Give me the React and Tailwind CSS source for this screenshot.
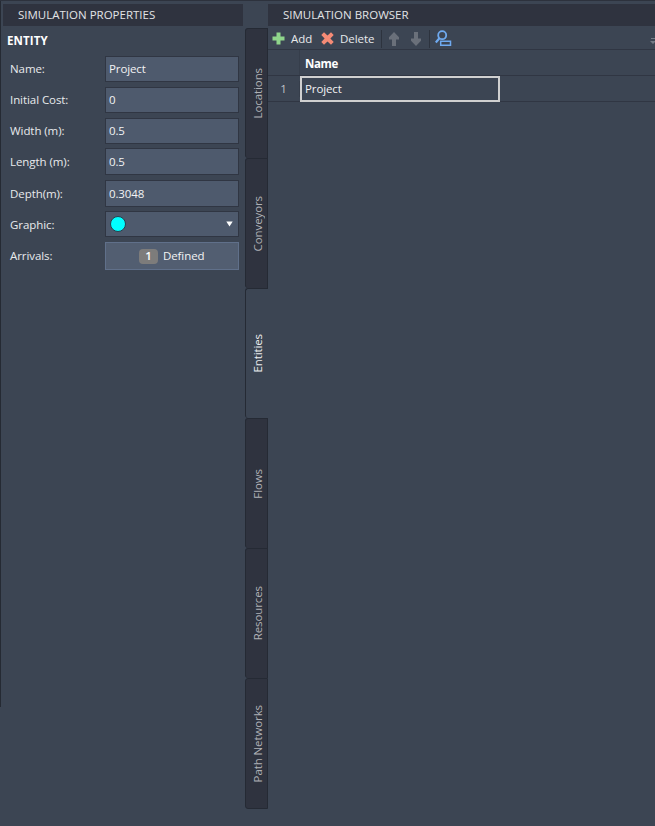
import React from "react";

const FIELDS = [
  { label: "Name:", value: "Project", row: "h-[26px] mb-[5px]" },
  { label: "Initial Cost:", value: "0", row: "h-[26px] mb-[5px]" },
  { label: "Width (m):", value: "0.5", row: "h-[26px] mb-[4px]" },
  { label: "Length (m):", value: "0.5", row: "h-[27px] mb-[5px]" },
  { label: "Depth(m):", value: "0.3048", row: "h-[27px] mb-[4px]" },
];

const TABS = ["Locations", "Conveyors", "Entities", "Flows", "Resources", "Path Networks"];

function Label({ children }) {
  return <div className="w-[95px] shrink-0 tracking-[-0.07px] text-[#e8eaec]">{children}</div>;
}

function Properties() {
  return (
    <section className="w-[245px] shrink-0">
      <div className="ml-[3px] mr-[2px] h-[22px] bg-[#2f333f] pl-[15px] leading-[22px] text-[#e2e4e6]">
        SIMULATION PROPERTIES
      </div>
      <div className="ml-[7px] mt-[5px] h-[20px] text-[11.5px] font-bold leading-[20px] tracking-[0.1px] text-white">ENTITY</div>
      <div className="pl-[10px] pt-[5px]">
        {FIELDS.map((f) => (
          <div key={f.label} className={`flex items-center ${f.row}`}>
            <Label>{f.label}</Label>
            <div className="flex h-full w-[134px] items-center border border-[#303643] bg-[#4e5a6d] pl-[3px] tracking-[-0.12px] text-[#f2f3f4]">
              {f.value}
            </div>
          </div>
        ))}
        <div className="mb-[5px] flex h-[26px] items-center">
          <div className="pt-[2px]"><Label>Graphic:</Label></div>
          <div className="flex h-full w-[134px] items-center justify-between border border-[#303643] bg-[#4e5a6d] pl-[4px] pr-[5px]">
            <span className="h-4 w-4 rounded-full border border-[#26404f] bg-[#00ffff]" />
            <svg width="7" height="6" viewBox="0 0 7 6" fill="#fff"><path d="M.3.5h6.4L3.5 5.5z" /></svg>
          </div>
        </div>
        <div className="flex h-[28px] items-center">
          <Label>Arrivals:</Label>
          <div className="flex h-full w-[134px] items-center border border-[#60708a] bg-[#525e71] pl-[33px] tracking-[-0.1px] text-[#f2f3f4]">
            <span className="mr-[5px] flex h-[15px] w-[19px] items-center justify-center rounded-[4px] bg-[#7d7c7b] font-semibold text-white">1</span>
            Defined
          </div>
        </div>
      </div>
    </section>
  );
}

function TabStrip() {
  return (
    <nav className="w-[23px] shrink-0 pt-[24px]">
      {TABS.map((t) => {
        const active = t === "Entities";
        return (
          <div
            key={t}
            className={`flex h-[130px] items-center justify-center border-l border-t last:h-[131px] last:border-b rounded-l-[3px] border-[#252a34] pl-[2px] ${
              active ? "bg-[#3c4553] pr-px text-[#eceef0]" : "border-r bg-[#2f333f] text-[#afb1b6]"
            }`}
          >
            <span className="rotate-180 whitespace-nowrap tracking-[-0.1px] [writing-mode:vertical-rl]">{t}</span>
          </div>
        );
      })}
    </nav>
  );
}

function Arrow({ down }) {
  return (
    <svg width="12" height="14" viewBox="0 0 12 14" fill="#6a707a" className={down ? "rotate-180" : ""}>
      <path d="M6 0 11 5.2V7.4H8V14H4V7.4H1V5.2z" />
    </svg>
  );
}

function Toolbar() {
  return (
    <div className="flex h-[24px] items-center border-b border-[#303643] pl-[4px] pt-[2px] text-[#e8eaec]">
      <svg width="13" height="13" viewBox="0 0 13 13" fill="#8fd58b"><path d="M4.5.5h4v4h4v4h-4v4h-4v-4h-4v-4h4z" /></svg>
      <span className="ml-[6px] w-[30px]">Add</span>
      <svg width="13" height="13" viewBox="0 0 13 13" fill="#f58b76"><path d="M3 .3 6.5 3.5 10 .3 12.7 3 9.4 6.5 12.7 10 10 12.7 6.5 9.5 3 12.7.3 10 3.6 6.5.3 3z" /></svg>
      <span className="ml-[6px] w-[41px] tracking-[-0.05px]">Delete</span>
      <span className="h-[18px] w-px bg-[#2d333e]" />
      <span className="ml-[6px] flex gap-[10px]"><Arrow /><Arrow down /></span>
      <span className="ml-[7px] h-[18px] w-px bg-[#2d333e]" />
      <svg className="ml-[5px]" width="17" height="17" viewBox="0 0 17 17" fill="none" stroke="#6faaf0">
        <circle cx="7.2" cy="5.2" r="4" strokeWidth="1.8" />
        <path d="M4.4 8.3.8 12.5" strokeWidth="2.2" />
        <path d="M5.7 11.3h9.8v3.9H5.7z" strokeWidth="1.5" />
      </svg>
      <svg className="ml-auto mt-[6px]" width="5" height="7" viewBox="0 0 5 7" fill="#747b86"><path d="M1 0h4v1H1zM0 3h5v1L3 6z" /></svg>
    </div>
  );
}

function Browser() {
  return (
    <section className="min-w-0 flex-1">
      <div className="h-[22px] bg-[#2f333f] pl-[15px] leading-[22px] text-[#e2e4e6]">SIMULATION BROWSER</div>
      <Toolbar />
      <div className="flex h-[26px] items-center border-b border-[#303643]">
        <div className="h-full w-[32px] border-r border-[#363e4b]" />
        <div className="pl-[5px] pt-[2px] text-[11.5px] font-bold tracking-[-0.4px] text-white">Name</div>
      </div>
      <div className="flex h-[26px] items-center border-b border-[#303643]">
        <div className="w-[32px] border-r border-[#363e4b] text-center text-[#c0c3c8]">1</div>
        <div className="flex h-[26px] w-[200px] items-center border-2 border-[#d0d0d0] pl-[3px] tracking-[-0.12px] text-[#f2f3f4]">Project</div>
      </div>
    </section>
  );
}

export default function App() {
  return (
    <div className="h-[826px] w-[655px] overflow-hidden bg-[#3c4553] font-['Open_Sans','Noto_Sans',sans-serif] text-[11.5px] leading-4">
      <div className="h-px bg-[#2d323d]" />
      <div className="relative flex h-[825px] pt-[3px]">
        <div className="absolute left-0 top-0 h-[706px] w-px bg-[#252a33]" />
        <Properties />
        <TabStrip />
        <Browser />
      </div>
    </div>
  );
}
